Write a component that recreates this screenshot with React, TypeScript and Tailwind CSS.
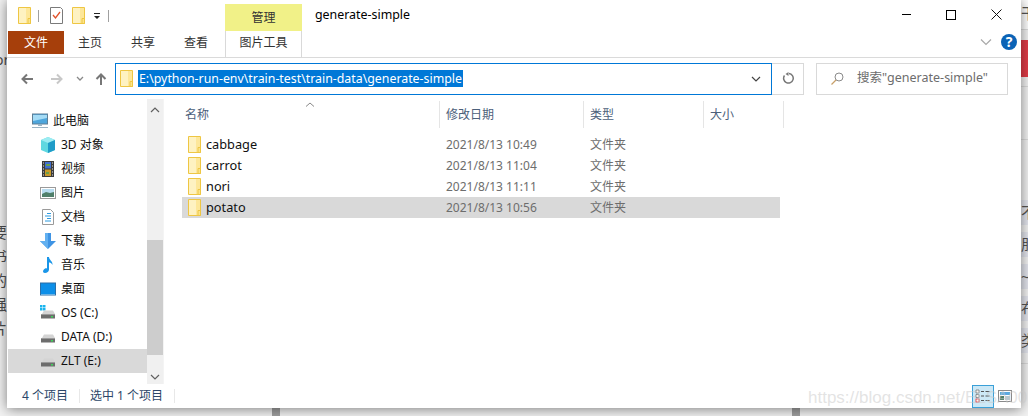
// App

const font = { sans: "font-['Noto_Sans','Noto_Sans_CJK_SC',sans-serif]" };

const FolderIcon = ({ className = "" }: { className?: string }) => (
  <svg width="13" height="17" viewBox="0 0 13 17" className={className}>
    <path d="M.5.5h12v16H.5z" fill="#fde79a" stroke="#eec643" />
    <path d="M1 1h7v15H1z" fill="#fef2c2" />
    <path d="M10 11.500h2.500v5H10z" fill="#fbe48a" stroke="#eec643" />
  </svg>
);

const DriveIcon = ({ windows }: { windows?: boolean }) => (
  <svg width="16" height="16" viewBox="0 0 16 16">
    {windows && (
      <g fill="#19b4ee">
        <rect x="0" y="0" width="2.500" height="2.500" />
        <rect x="3" y="0" width="2.500" height="2.500" />
        <rect x="0" y="3" width="2.500" height="2.500" />
        <rect x="3" y="3" width="2.500" height="2.500" />
      </g>
    )}
    <path d="M2 9 4 5.500h9L15 9z" fill="#d4d4d4" />
    <path d="M1 9h14v4.500H1z" fill="#6d6d6d" />
    <path d="M1 9h14v1H1z" fill="#9a9a9a" />
    <rect x="11" y="11" width="2" height="1.500" fill="#3fd35a" />
  </svg>
);

const sideIcons: Record<string, React.ReactNode> = {
  pc: (
    <svg width="16" height="16" viewBox="0 0 16 16">
      <rect x=".5" y="1" width="15" height="10" fill="#4ea6dc" stroke="#5f7f96" />
      <path d="M1 2h14v3L1 8z" fill="#a5dcf6" />
      <path d="M6 11h4v2H6zM0 14h16v1H0z" fill="#9bb4c4" />
    </svg>
  ),
  cube: (
    <svg width="16" height="16" viewBox="0 0 16 16">
      <path d="M8 0l7 3v10l-7 3-7-3V3z" fill="#5fd8e0" />
      <path d="M1 3l7 3 7-3-7-3z" fill="#9cecf2" />
      <path d="M8 6l7-3v10l-7 3z" fill="#1f9cc8" />
    </svg>
  ),
  video: (
    <svg width="16" height="16" viewBox="0 0 16 16">
      <rect x="2" y="0" width="12" height="16" fill="#3c3c3c" />
      <rect x="5" y="1" width="6" height="6.500" fill="#3f6fd0" />
      <rect x="5" y="8.500" width="6" height="6.500" fill="#c89a2a" />
      <path d="M6 3h4v2H6zM6 11h3v2H6z" fill="#6aa04a" />
      <path d="M3 1.500h1v1H3zM3 4.500h1v1H3zM3 7.500h1v1H3zM3 10.500h1v1H3zM3 13.500h1v1H3zM12 1.500h1v1h-1zM12 4.500h1v1h-1zM12 7.500h1v1h-1zM12 10.500h1v1h-1zM12 13.500h1v1h-1z" fill="#e4e4e4" />
    </svg>
  ),
  picture: (
    <svg width="16" height="16" viewBox="0 0 16 16">
      <rect x=".5" y="2.500" width="15" height="11" fill="#fff" stroke="#9a9a9a" />
      <rect x="2" y="4" width="12" height="8" fill="#b8dcf0" />
      <path d="M2 9l4-2 4 1 4-1v5H2z" fill="#4f7f6a" />
    </svg>
  ),
  doc: (
    <svg width="16" height="16" viewBox="0 0 16 16">
      <path d="M2.500.5h8l3 3v12h-11z" fill="#fff" stroke="#9a9a9a" />
      <path d="M7 4h4v1H7zM5 6.500h6v1H5zM7 9h4v1H7zM5 11.500h6v1H5z" fill="#2f9be0" />
    </svg>
  ),
  download: (
    <svg width="16" height="16" viewBox="0 0 16 16">
      <path d="M5 0h6v8h5l-8 8-8-8h5z" fill="#3f94e4" />
      <path d="M5 0h3v16L0 8h5z" fill="#62b0f0" />
    </svg>
  ),
  music: (
    <svg width="16" height="16" viewBox="0 0 16 16">
      <path d="M7 0h2c0 3 4 4 3.500 8C11.500 6 10 5.500 9 5.500V12.500c0 2-2 3.500-4 3.500S2.500 14.500 3.500 13 6 11 7 11.500z" fill="#1a96e8" />
    </svg>
  ),
  desktop: (
    <svg width="16" height="16" viewBox="0 0 16 16">
      <rect x=".5" y="2" width="15" height="12" fill="#0d8fe8" stroke="#2a6fa8" />
      <path d="M1 13h14v.5H1z" fill="#bfe4fa" />
    </svg>
  ),
};

const sideItems = [
  { label: "3D 对象", icon: sideIcons.cube },
  { label: "视频", icon: sideIcons.video },
  { label: "图片", icon: sideIcons.picture },
  { label: "文档", icon: sideIcons.doc },
  { label: "下载", icon: sideIcons.download },
  { label: "音乐", icon: sideIcons.music },
  { label: "桌面", icon: sideIcons.desktop },
  { label: "OS (C:)", icon: <DriveIcon windows /> },
  { label: "DATA (D:)", icon: <DriveIcon /> },
  { label: "ZLT (E:)", icon: <DriveIcon />, selected: true },
];

const files = [
  { name: "cabbage", date: "2021/8/13 10:49" },
  { name: "carrot", date: "2021/8/13 11:04" },
  { name: "nori", date: "2021/8/13 11:11" },
  { name: "potato", date: "2021/8/13 10:56", selected: true },
];

const Chevron = ({ d, className = "" }: { d: string; className?: string }) => (
  <svg width="12" height="8" viewBox="0 0 12 8" className={className}>
    <path d={d} fill="none" stroke="currentColor" strokeWidth="1.200" />
  </svg>
);

const App = () => {
  return (
    <div className={`flex h-[416px] w-[1028px] overflow-hidden bg-[#f3f3f3] text-[12px] ${font.sans}`}>
      {/* page behind, left edge */}
      <div className="flex h-full w-[7px] shrink-0 flex-col items-end overflow-hidden text-[15px] leading-[24px] text-[#4d4d4d]">
        <div className="mt-[49px] w-[7px] overflow-hidden text-[14px] leading-[22px]">
          <span className="ml-[-5px] block w-[14px]">or</span>
        </div>
        <div className="mt-[149px] flex w-[15px] shrink-0 flex-col items-center">
          <span>要</span>
          <span>书</span>
          <span>的</span>
          <span>强</span>
          <span>片</span>
          <span>。</span>
        </div>
      </div>

      <div className="flex w-[1014px] shrink-0 flex-col">
        <div className="relative z-10 flex h-[408px] shrink-0 flex-col bg-white shadow-[0_1px_12px_rgba(0,0,0,0.5)]">
          {/* title bar */}
          <div className="flex h-[31px] items-end pl-[11px]">
            <div className="mb-[7px] flex items-center">
              <FolderIcon />
              <div className="ml-[7px] h-[12px] w-px bg-[#a0a0a0]" />
              <svg width="13" height="17" viewBox="0 0 13 17" className="ml-[11px]">
                <path d="M.5.500h10l2 2v14H.5z" fill="#fff" stroke="#7a7a7a" />
                <path d="M3 8l2.500 3L10 5" fill="none" stroke="#e0512a" strokeWidth="1.300" />
              </svg>
              <FolderIcon className="ml-[9px]" />
              <svg width="8" height="8" viewBox="0 0 8 8" className="ml-[8px]">
                <path d="M1 1h6v1H1zM1 4h6L4 7z" fill="#222" />
              </svg>
              <div className="ml-[7px] h-[12px] w-px bg-[#a0a0a0]" />
            </div>
            <div className="ml-[116px] flex h-[27px] w-[77px] items-center justify-center bg-[#f1f188] text-[#333]">管理</div>
            <div className="mb-[6px] ml-[13px] text-[12.4px] text-black">generate-simple</div>
            <div className="ml-auto mb-[11px] flex items-center">
              <div className="h-px w-[9px] bg-black" />
              <div className="ml-[35px] h-[10px] w-[10px] border border-black" />
              <svg width="11" height="11" viewBox="0 0 11 11" className="ml-[35px] mr-[19px]">
                <path d="M.5.500l10 10M10.500.500l-10 10" stroke="#111" fill="none" />
              </svg>
            </div>
          </div>

          {/* ribbon tabs */}
          <div className="flex h-[27px] items-start border-b border-[#dadada] text-[#333]">
            <div className="ml-px flex h-[23px] w-[56px] items-center justify-center bg-[#a63f0b] text-white">文件</div>
            <div className="ml-[14px] flex h-[23px] items-center">主页</div>
            <div className="ml-[29px] flex h-[23px] items-center">共享</div>
            <div className="ml-[29px] flex h-[23px] items-center">查看</div>
            <div className="ml-[17px] flex h-[26px] w-[77px] items-center justify-center border-x border-[#d9d9d9] pb-[3px]">图片工具</div>
            <div className="ml-auto flex items-center pt-[3px]">
              <Chevron d="M1 1.500l5 5 5-5" className="text-[#a8a8a8]" />
              <div className="ml-[9px] mr-[4px] flex h-[16px] w-[16px] items-center justify-center rounded-full bg-[#0b63b6] text-[14px] font-bold leading-none text-white">?</div>
            </div>
          </div>

          {/* address bar */}
          <div className="flex h-[41px] items-center">
            <svg width="12" height="12" viewBox="0 0 12 12" className="ml-[14px] text-[#777]">
              <path d="M12 6H1.500M6 1.500 1.500 6 6 10.500" fill="none" stroke="currentColor" strokeWidth="2" />
            </svg>
            <svg width="12" height="12" viewBox="0 0 12 12" className="ml-[18px] text-[#c8c8c8]">
              <path d="M0 6h10.500M6 1.500 10.500 6 6 10.500" fill="none" stroke="currentColor" strokeWidth="2" />
            </svg>
            <svg width="8" height="6" viewBox="0 0 8 6" className="ml-[13px] text-[#888]">
              <path d="M1 1l3 3 3-3" fill="none" stroke="currentColor" strokeWidth="1.300" />
            </svg>
            <svg width="12" height="12" viewBox="0 0 12 12" className="ml-[11px] text-[#777]">
              <path d="M6 12V1.500M1.500 6 6 1.500 10.500 6" fill="none" stroke="currentColor" strokeWidth="2" />
            </svg>
            <div className="ml-[8px] flex h-[32px] w-[657px] items-center border border-[#0078d7] pl-[4px]">
              <FolderIcon />
              <span className="ml-[5px] bg-[#0078d7] px-px text-[12.35px] leading-[17px] text-white">E:\python-run-env\train-test\train-data\generate-simple</span>
              <Chevron d="M2 2l4 4 4-4" className="ml-auto mr-[9px] text-[#444]" />
            </div>
            <div className="flex h-[32px] w-[32px] items-center justify-center border border-l-0 border-[#d9d9d9]">
              <svg width="12" height="13" viewBox="0 0 12 13" className="text-[#777]">
                <path d="M7 1.500a4.800 4.800 0 1 1-4.500 2" fill="none" stroke="currentColor" strokeWidth="1.500" />
                <path d="M6.500 0v4L3.500 2z" fill="currentColor" />
              </svg>
            </div>
            <div className="ml-[12px] flex h-[32px] w-[192px] items-center border border-[#d9d9d9] pl-[14px] text-[12.5px] text-[#6d6d6d]">
              <svg width="13" height="13" viewBox="0 0 13 13">
                <circle cx="8" cy="5" r="4" fill="none" stroke="#8a8a8a" />
                <path d="M5 8l-4.500 4.500" stroke="#c8a06a" strokeWidth="1.200" />
              </svg>
              <span className="ml-[13px]">搜索"generate-simple"</span>
            </div>
          </div>

          {/* body */}
          <div className="flex h-[285px]">
            <div className="flex w-[140px] shrink-0 flex-col pl-px pt-[10px] text-[#111]">
              <div className="flex h-[24px] items-center pl-[24px]">
                {sideIcons.pc}
                <span className="ml-[5px]">此电脑</span>
              </div>
              {sideItems.map((item, index) => (
                <div
                  key={index}
                  className={`flex h-[24px] items-center pl-[32px] ${item.selected ? "bg-[#d9d9d9]" : ""}`}
                >
                  {item.icon}
                  <span className="ml-[5px]">{item.label}</span>
                </div>
              ))}
            </div>
            <div className="flex w-[16px] shrink-0 flex-col items-center bg-[#f0f0f0] text-[#606060]">
              <Chevron d="M2 6l4-4 4 4" className="mt-[7px]" />
              <div className="mt-[126px] h-[115px] w-full bg-[#cdcdcd]" />
              <Chevron d="M2 2l4 4 4-4" className="mt-[18px]" />
            </div>

            {/* file list */}
            <div className="relative flex min-w-0 flex-1 flex-col border-l border-[#f4f4f4] pl-[18px]">
              <svg width="10" height="5" viewBox="0 0 10 5" className="absolute left-[141px] top-[3px] text-[#888]">
                <path d="M1 4.500 5 1l4 3.500" fill="none" stroke="currentColor" />
              </svg>
              <div className="mt-[2px] flex h-[27px] text-[#4c607a]">
                <div className="flex w-[257px] items-center pl-[3px]">名称</div>
                <div className="flex w-[144px] items-center border-l border-[#e5e5e5] pl-[6px]">修改日期</div>
                <div className="flex w-[120px] items-center border-l border-[#e5e5e5] pl-[6px]">类型</div>
                <div className="flex w-[81px] items-center border-x border-[#e5e5e5] pl-[6px]">大小</div>
              </div>
              <div className="mt-[6px] flex w-[598px] flex-col">
                {files.map((file, index) => (
                  <div
                    key={index}
                    className={`flex h-[21px] items-center ${file.selected ? "bg-[#d9d9d9]" : ""}`}
                  >
                    <div className="flex w-[264px] items-center pl-[6px] text-[12.75px] text-[#111]">
                      <FolderIcon />
                      <span className="ml-[5px]">{file.name}</span>
                    </div>
                    <div className="w-[144px] text-[#6d6d6d]">{file.date}</div>
                    <div className="text-[#6d6d6d]">文件夹</div>
                  </div>
                ))}
              </div>
            </div>
          </div>

          {/* status bar */}
          <div className="flex h-[24px] items-center text-[#2b4668]">
            <span className="ml-[15px]">4 个项目</span>
            <div className="ml-[11px] h-[14px] w-px bg-[#e8e8e8]" />
            <span className="ml-[10px]">选中 1 个项目</span>
            <div className="ml-[11px] h-[14px] w-px bg-[#e8e8e8]" />
            <div className="ml-auto flex items-center">
              <div className="flex h-[23px] w-[22px] items-center justify-center border border-[#3aa0d8] bg-[#cce8f6]">
                <svg width="16" height="14" viewBox="0 0 16 14">
                  <path d="M1 1h3v3H1zM1 5.500h3v3H1z" fill="#fff" stroke="#777" strokeWidth=".8" />
                  <rect x="1" y="10" width="3" height="3" fill="#fff" stroke="#d33" strokeWidth=".8" />
                  <path d="M6 2.500h3M10.500 2.500h4M6 7h3M10.500 7h4M6 11.500h3M10.500 11.500h4" stroke="#555" />
                </svg>
              </div>
              <svg width="14" height="12" viewBox="0 0 14 12" className="ml-[4px] mr-[9px]">
                <rect x=".5" y=".5" width="13" height="11" fill="#fff" stroke="#8a8a8a" />
                <rect x="2" y="2" width="10" height="3" fill="#5aa8e0" />
                <rect x="2" y="6" width="4" height="4" fill="#4f7f6a" />
                <rect x="7" y="6" width="5" height="4" fill="#b8c8d0" />
              </svg>
            </div>
          </div>

          {/* watermark over the window */}
          <div className="absolute left-[801px] top-[388px] font-['Liberation_Sans',sans-serif] text-[17px] leading-[20px] text-[#c8c8c8]/50">
            https://blog.csdn.net/ELSA001
          </div>
        </div>

        {/* page behind, under the window */}
        <div className="flex h-[8px] shrink-0">
          <div className="ml-[265px] h-full w-[8px] bg-[#a0a0a0]" />
          <div className="ml-[512px] h-full w-[8px] bg-[#a0a0a0]" />
        </div>
      </div>

      {/* page behind, right edge */}
      <div className="flex h-full w-[7px] shrink-0 flex-col overflow-hidden text-[15px] leading-[25px] text-[#555]">
        <div className="h-[30px] w-[15px] shrink-0 border-b border-[#dcdcdc] bg-white pt-[3px] leading-[20px]">干</div>
        <div className="mt-[10px] h-[37px] w-full shrink-0 bg-[#e23c48]" />
        <div className="h-[10px] w-full shrink-0 border-b border-[#dcdcdc]" />
        <div className="mt-[52px] h-px w-full shrink-0 bg-[#dcdcdc]" />
        <div className="mt-[60px] flex w-[15px] shrink-0 flex-col gap-[7px]">
          <span className="h-[25px] bg-[#e4e6ee]">不</span>
          <span className="h-[25px] bg-[#e4e6ee]">朋</span>
          <span className="h-[25px] bg-[#e4e6ee]">~</span>
          <span className="h-[25px] bg-[#e4e6ee]">布</span>
          <span className="h-[25px] bg-[#e4e6ee]">类</span>
        </div>
        <div className="mt-[10px] h-px w-full shrink-0 bg-[#dcdcdc]" />
      </div>
    </div>
  );
};

export default App;
